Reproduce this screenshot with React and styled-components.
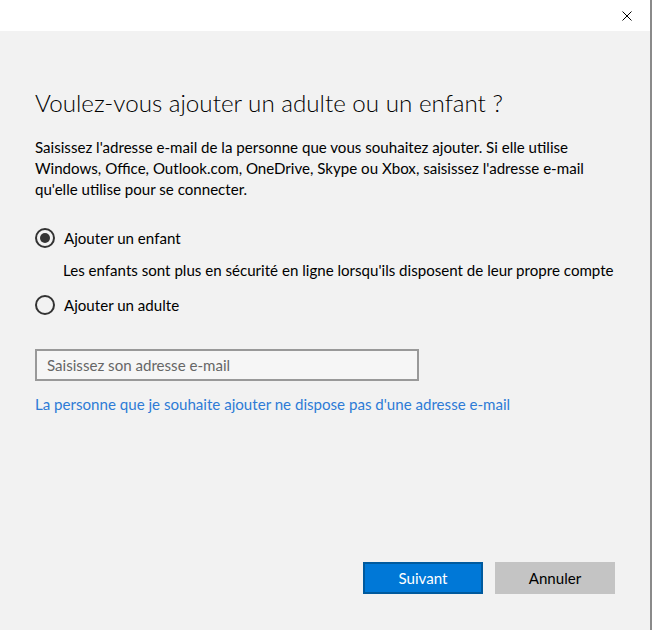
import React from "react";
import styled, { createGlobalStyle } from "styled-components";

const GlobalStyle = createGlobalStyle`
  html, body {
    margin: 0;
    padding: 0;
    background: #f2f2f2;
  }
  body {
    font-family: "Lato", "Noto Sans", sans-serif;
    color: #000;
  }
`;

const Window = styled.div`
  width: 650px;
  height: 630px;
  display: flex;
  flex-direction: column;
  background: #f2f2f2;
  border-right: 2px solid #8a8a8a;
`;

const TitleBar = styled.div`
  height: 31px;
  background: #fff;
  display: flex;
  justify-content: flex-end;
  align-items: center;
`;

const CloseButton = styled.button`
  width: 46px;
  height: 31px;
  border: 0;
  background: transparent;
  display: flex;
  align-items: center;
  justify-content: center;
  padding: 0;
`;

const Content = styled.div`
  flex: 1;
  display: flex;
  flex-direction: column;
  padding: 56px 35px 36px 35px;
`;

const Title = styled.h1`
  margin: 0;
  font-size: 24.2px;
  font-weight: 300;
  line-height: 31px;
`;

const Text = styled.p`
  margin: 0;
  font-size: 15.1px;
  line-height: 21.5px;
`;

const Intro = styled(Text)`
  margin-top: 19px;
  line-height: 21px;
`;

const Options = styled.div`
  margin-top: 27px;
  display: flex;
  flex-direction: column;
`;

const RadioRow = styled.label`
  display: flex;
  align-items: center;
  gap: 9px;
  height: 22px;
  font-size: 15.1px;
`;

const RadioCircle = styled.span`
  width: 20px;
  height: 20px;
  box-sizing: border-box;
  border: 2px solid #333;
  border-radius: 50%;
  display: flex;
  align-items: center;
  justify-content: center;
  &::after {
    content: "";
    width: 10px;
    height: 10px;
    border-radius: 50%;
    background: ${(p) => (p.checked ? "#333" : "transparent")};
  }
`;

const Hint = styled(Text)`
  margin: 11px 0 12px 28px;
`;

const EmailInput = styled.div`
  margin-top: 33px;
  width: 384px;
  height: 32px;
  box-sizing: border-box;
  border: 2px solid #999;
  background: #f6f6f6;
  color: #666;
  font-size: 15.1px;
  display: flex;
  align-items: center;
  padding-left: 10px;
`;

const Link = styled.a`
  margin-top: 13px;
  color: #2d7bd6;
  font-size: 15.1px;
  line-height: 21px;
  text-decoration: none;
`;

const Footer = styled.div`
  margin-top: auto;
  display: flex;
  justify-content: flex-end;
  gap: 12px;
`;

const Button = styled.button`
  width: 120px;
  height: 32px;
  box-sizing: border-box;
  font-family: inherit;
  font-size: 15.1px;
  border: 2px solid ${(p) => (p.primary ? "#005a9e" : "#c4c4c4")};
  background: ${(p) => (p.primary ? "#0078d7" : "#c4c4c4")};
  color: ${(p) => (p.primary ? "#fff" : "#000")};
  padding: 0;
`;

const Radio = ({ checked, children }) => (
  <RadioRow>
    <RadioCircle checked={checked} />
    {children}
  </RadioRow>
);

export default function App() {
  return (
    <>
      <GlobalStyle />
      <Window>
        <TitleBar>
          <CloseButton aria-label="Fermer">
            <svg width="10" height="10" viewBox="0 0 10 10">
              <path d="M0.5 0.5 L9.5 9.5 M9.5 0.5 L0.5 9.5" stroke="#000" strokeWidth="1" />
            </svg>
          </CloseButton>
        </TitleBar>
        <Content>
          <Title>Voulez-vous ajouter un adulte ou un enfant ?</Title>
          <Intro>
            Saisissez l'adresse e-mail de la personne que vous souhaitez ajouter. Si elle utilise
            <br />
            Windows, Office, Outlook.com, OneDrive, Skype ou Xbox, saisissez l'adresse e-mail
            <br />
            qu'elle utilise pour se connecter.
          </Intro>
          <Options>
            <Radio checked>Ajouter un enfant</Radio>
            <Hint>Les enfants sont plus en sécurité en ligne lorsqu'ils disposent de leur propre compte</Hint>
            <Radio>Ajouter un adulte</Radio>
          </Options>
          <EmailInput>Saisissez son adresse e-mail</EmailInput>
          <Link href="#">La personne que je souhaite ajouter ne dispose pas d'une adresse e-mail</Link>
          <Footer>
            <Button primary>Suivant</Button>
            <Button>Annuler</Button>
          </Footer>
        </Content>
      </Window>
    </>
  );
}
